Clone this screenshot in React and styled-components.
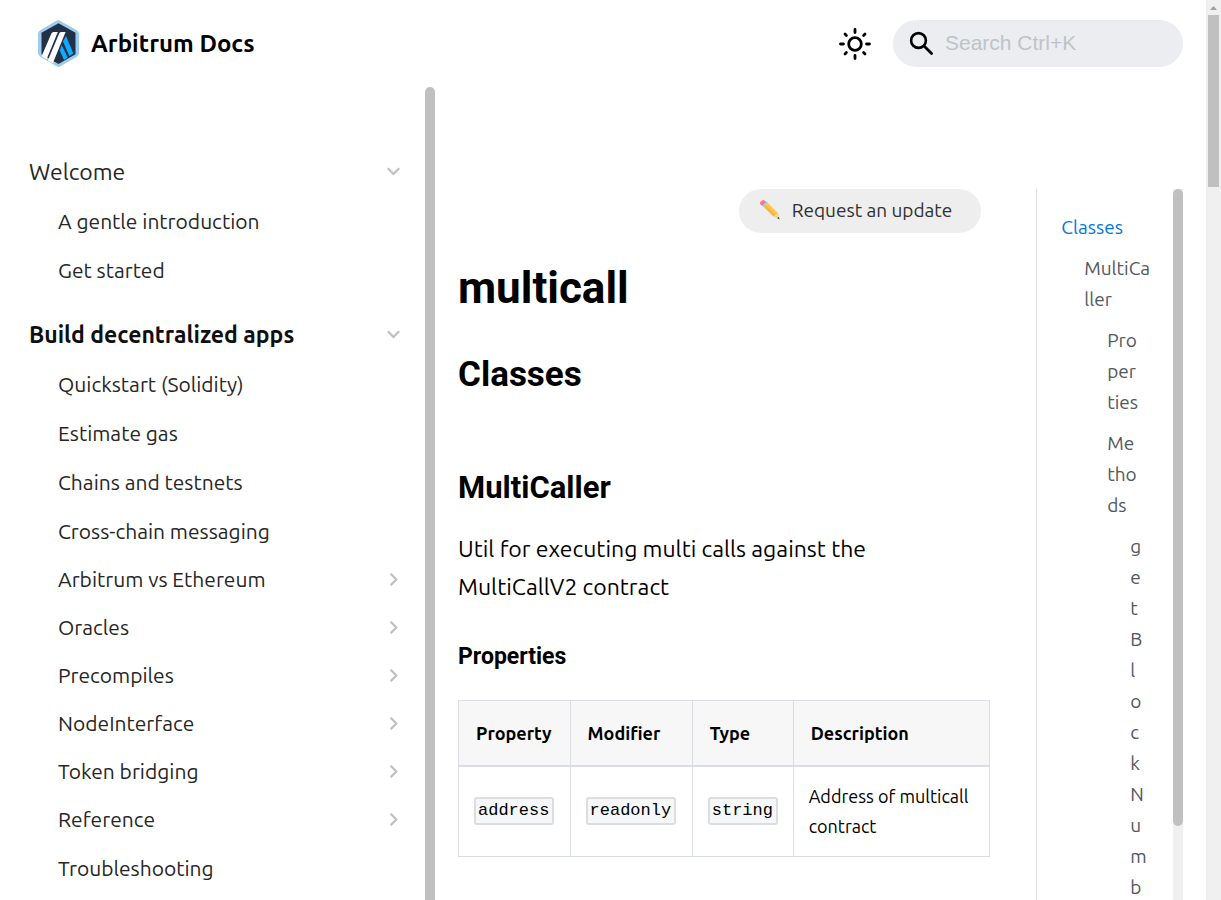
import React from "react";
import styled, { createGlobalStyle, css } from "styled-components";

const GlobalStyle = createGlobalStyle`
  *, *::before, *::after { box-sizing: border-box; }
  body {
    margin: 0;
    background: #fff;
    color: #000;
    font-family: Ubuntu, "Noto Sans", sans-serif;
    font-size: 23px;
    line-height: 38px;
  }
  a { color: inherit; text-decoration: none; }
  ul { list-style: none; margin: 0; padding: 0; }
`;

const Shell = styled.div`
  display: flex;
  height: 100vh;
  overflow: hidden;
`;

const Page = styled.div`
  flex: 1;
  min-width: 0;
  display: flex;
  flex-direction: column;
`;

const Header = styled.header`
  flex: none;
  display: flex;
  align-items: center;
  justify-content: space-between;
  height: 87px;
  padding: 0 23px 0 38px;
`;

const Brand = styled.a`
  display: flex;
  align-items: center;
  gap: 12px;
  font-size: 24px;
  font-weight: 700;
`;

const Tools = styled.div`
  display: flex;
  align-items: center;
  gap: 14px;
`;

const ThemeButton = styled.button`
  display: flex;
  align-items: center;
  justify-content: center;
  width: 48px;
  height: 48px;
  padding: 0;
  border: 0;
  background: none;
`;

const SearchBox = styled.label`
  display: flex;
  align-items: center;
  gap: 11px;
  width: 290px;
  height: 47px;
  padding: 0 16px;
  border-radius: 24px;
  background: #ebedf0;
`;

const SearchInput = styled.input`
  flex: 1;
  min-width: 0;
  padding: 0 0 2px;
  border: 0;
  outline: 0;
  background: none;
  font-family: "Liberation Sans", Arial, sans-serif;
  font-size: 21px;
  &::placeholder { color: #bec3c9; opacity: 1; }
`;

const Body = styled.div`
  flex: 1;
  min-height: 0;
  display: flex;
`;

const Sidebar = styled.aside`
  flex: none;
  display: flex;
  width: 435px;
`;

const Menu = styled.nav`
  flex: 1;
  min-width: 0;
  overflow: hidden;
  padding: 59px 12px 0;
`;

const MenuSection = styled.section`
  margin-bottom: 15px;
`;

const caretRow = css`
  display: flex;
  align-items: center;
  justify-content: space-between;
  width: 100%;
  padding: 0 13px 0 17px;
`;

const SectionButton = styled.button`
  ${caretRow}
  height: 50px;
  border: 0;
  background: none;
  color: ${(p) => (p.$active ? "#0f0f0f" : "#262626")};
  font-family: inherit;
  font-size: 23px;
  font-weight: ${(p) => (p.$active ? 700 : 400)};
`;

const MenuLink = styled.a`
  ${caretRow}
  height: ${(p) => (p.$category ? 48 : 49)}px;
  padding-left: 46px;
  color: #262626;
  font-size: 21px;
`;

const Track = styled.div`
  flex: none;
  width: 10px;
  background: ${(p) => (p.$plain ? "transparent" : "#f0f0f0")};
`;

const Thumb = styled.div`
  height: ${(p) => p.$size};
  border-radius: ${(p) => (p.$openEnd ? "5px 5px 0 0" : "5px")};
  background: #c0c0c0;
`;

const Main = styled.main`
  flex: 1;
  min-width: 0;
  display: flex;
  overflow: hidden;
  padding-top: 102px;
`;

const Article = styled.article`
  width: 75%;
  padding: 0 23px;
`;

const UpdateRow = styled.div`
  display: flex;
  justify-content: flex-end;
  margin: 0 9px 27px 0;
`;

const UpdateButton = styled.button`
  display: flex;
  align-items: center;
  gap: 11px;
  height: 44px;
  padding: 0 29px 2px 20px;
  border: 0;
  border-radius: 22px;
  background: #eee;
  color: #303030;
  font-family: inherit;
  font-size: 19px;
`;

const heading = css`
  font-family: Roboto, sans-serif;
  font-weight: 700;
`;

const Title = styled.h1`
  ${heading}
  margin: 0 0 37px;
  font-size: 44px;
  line-height: 56px;
`;

const Heading2 = styled.h2`
  ${heading}
  margin: 0 0 71px;
  font-size: 35px;
  line-height: 44px;
`;

const Heading3 = styled.h3`
  ${heading}
  margin: 0 0 23px;
  font-size: 31px;
  line-height: 39px;
`;

const Heading4 = styled.h4`
  ${heading}
  margin: 0 0 29px;
  font-size: 23px;
  line-height: 29px;
`;

const Paragraph = styled.p`
  margin: 0 0 36px;
`;

const Table = styled.table`
  width: 100%;
  table-layout: fixed;
  border-collapse: collapse;
  font-size: 18px;
  line-height: 30px;
`;

const HeadCell = styled.th`
  width: ${(p) => p.$width};
  height: 65px;
  padding: 0 17px;
  border: 1px solid #dadde1;
  border-bottom-width: 2px;
  background: #f7f7f7;
  text-align: left;
  font-weight: 700;
`;

const Cell = styled.td`
  padding: 14px 15px 15px;
  border: 1px solid #dadde1;
`;

const Code = styled.code`
  display: block;
  width: max-content;
  padding: 0 3px 0 2px;
  border: 2px solid #dcdddf;
  border-radius: 3px;
  background: #f6f7f8;
  font-family: "Liberation Mono", monospace;
  font-size: 17px;
  line-height: 24px;
`;

const TocColumn = styled.aside`
  width: 25%;
  padding: 0 23px;
`;

const Toc = styled.nav`
  display: flex;
  height: 100%;
  border-left: 1px solid #dadde1;
  overflow: hidden;
`;

const TocBody = styled.div`
  flex: 1;
  min-width: 0;
  padding: 23px 0 0 1px;
`;

const TocList = styled.ul`
  padding-left: 12px;
`;

const TocItem = styled.li`
  margin: 0 11px;
`;

const TocLink = styled.a`
  display: block;
  margin-bottom: 10px;
  color: ${(p) => (p.$active ? "#0078d8" : "#525860")};
  font-size: 19px;
  line-height: 31px;
  overflow-wrap: anywhere;
`;

const PageTrack = styled.div`
  flex: none;
  width: 15px;
  background: #f0f0f0;
`;

const PageArrow = styled.div`
  display: flex;
  align-items: center;
  justify-content: center;
  height: 15px;
`;

const PageThumb = styled.div`
  height: 172px;
  margin: 0 2px;
  background: #c0c0c0;
`;

const LogoIcon = () => (
  <svg width="41" height="47" viewBox="0 0 41 47" aria-hidden="true">
    <defs>
      <clipPath id="hex">
        <path d="M20.500 0 L38.500 10 Q41 11.500 41 14 V33 Q41 35.500 38.500 37 L22.500 46.200 Q20.500 47.400 18.500 46.200 L2.500 37 Q0 35.500 0 33 V14 Q0 11.500 2.500 10 L18.500 0.800 Z" />
      </clipPath>
    </defs>
    <g clipPath="url(#hex)">
      <rect width="41" height="47" fill="#9dcced" />
      <path d="M20.500 3.200 L37.500 12.800 V34.200 L20.500 43.900 L3.500 34.200 V12.800 Z" fill="#213147" />
      <path d="M26.300 19 L28 16 L35.300 33.200 L31.400 36.200 L25 21.500 Z" fill="#12aaff" />
      <path d="M23.700 25 L29.800 37.600 L26 40 L21.800 30.400 Z" fill="#12aaff" />
      <path d="M15.200 12 H19.800 L8.600 39.300 L3.500 36.400 L13.600 13 Z" fill="#fff" />
      <path d="M22.800 12 H27.600 L14.800 43.200 L9.800 40.400 L21.400 13 Z" fill="#fff" />
    </g>
  </svg>
);

const SunIcon = () => (
  <svg width="34" height="34" viewBox="0 0 34 34" fill="none" stroke="#000" strokeWidth="2.800" strokeLinecap="round" aria-hidden="true">
    <circle cx="17" cy="17" r="6.300" />
    <path d="M17 2.500v3M17 28.500v3M2.500 17h3M28.500 17h3M7 7l1.400 1.400M25.600 25.600L27 27M7 27l1.400-1.400M25.600 8.400L27 7" />
  </svg>
);

const SearchIcon = () => (
  <svg width="25" height="25" viewBox="0 0 25 25" fill="none" stroke="#000" aria-hidden="true">
    <circle cx="9.500" cy="9.500" r="7.400" strokeWidth="2.600" />
    <path d="M15 15l7.600 7.600" strokeWidth="2.800" strokeLinecap="round" />
  </svg>
);

const PencilIcon = () => (
  <svg width="22" height="22" viewBox="0 0 22 22" aria-hidden="true">
    <path d="M4.800 7.200 L8.200 3.200 L19 14 L20 19.800 L14.400 17.600 Z" fill="#fbc74e" />
    <path d="M6.200 5.600 L16.600 15.900 L14.400 17.600 L4.200 7.800 Z" fill="#f5a93b" opacity=".6" />
    <path d="M14.400 17.600 L19 14 L20.300 20 Z" fill="#efd6a0" />
    <path d="M18.200 19.200 L19.900 17.800 L20.500 20.400 Z" fill="#4b4b4b" />
    <path d="M3 6.600 L7.100 2.300 L8.700 3.800 L4.700 8.300 Z" fill="#9ed7e8" />
    <path d="M1.400 5.200 Q.5 4 1.600 2.700 L3 1.500 Q4.300.6 5.400 1.500 L7.100 3.100 L3.400 7 Z" fill="#f2788f" />
  </svg>
);

const Caret = ({ open }) => (
  <svg width="13" height="13" viewBox="0 0 13 13" fill="none" stroke="#bfbfbf" strokeWidth="2.200" aria-hidden="true">
    <path d={open ? "M.8 3.200L6.500 9L12.200 3.200" : "M3.600.8L9.300 6.500L3.600 12.200"} />
  </svg>
);

const sections = [
  {
    label: "Welcome",
    items: [["A gentle introduction"], ["Get started"]],
  },
  {
    label: "Build decentralized apps",
    active: true,
    items: [
      ["Quickstart (Solidity)"],
      ["Estimate gas"],
      ["Chains and testnets"],
      ["Cross-chain messaging"],
      ["Arbitrum vs Ethereum", true],
      ["Oracles", true],
      ["Precompiles", true],
      ["NodeInterface", true],
      ["Token bridging", true],
      ["Reference", true],
      ["Troubleshooting"],
    ],
  },
];

const toc = [
  {
    label: "Classes",
    active: true,
    children: [
      {
        label: "MultiCaller",
        children: [
          { label: "Properties" },
          { label: "Methods", children: [{ label: "getBlockNumberInput" }] },
        ],
      },
    ],
  },
];

const columns = [
  ["Property", "21%"],
  ["Modifier", "23%"],
  ["Type", "19%"],
  ["Description", "37%"],
];

const TocTree = ({ items }) => (
  <TocList>
    {items.map((item) => (
      <TocItem key={item.label}>
        <TocLink href="#" $active={item.active}>{item.label}</TocLink>
        {item.children && <TocTree items={item.children} />}
      </TocItem>
    ))}
  </TocList>
);

export default function App() {
  return (
    <>
      <GlobalStyle />
      <Shell>
        <Page>
          <Header>
            <Brand href="#">
              <LogoIcon />
              Arbitrum Docs
            </Brand>
            <Tools>
              <ThemeButton type="button" aria-label="Switch theme">
                <SunIcon />
              </ThemeButton>
              <SearchBox>
                <SearchIcon />
                <SearchInput type="search" placeholder="Search Ctrl+K" aria-label="Search" />
              </SearchBox>
            </Tools>
          </Header>
          <Body>
            <Sidebar>
              <Menu aria-label="Docs">
                {sections.map((section) => (
                  <MenuSection key={section.label}>
                    <SectionButton type="button" $active={section.active}>
                      {section.label}
                      <Caret open />
                    </SectionButton>
                    <ul>
                      {section.items.map(([label, category]) => (
                        <li key={label}>
                          <MenuLink href="#" $category={category}>
                            {label}
                            {category && <Caret />}
                          </MenuLink>
                        </li>
                      ))}
                    </ul>
                  </MenuSection>
                ))}
              </Menu>
              <Track $plain>
                <Thumb $size="100%" $openEnd />
              </Track>
            </Sidebar>
            <Main>
              <Article>
                <UpdateRow>
                  <UpdateButton type="button">
                    <PencilIcon />
                    Request an update
                  </UpdateButton>
                </UpdateRow>
                <Title>multicall</Title>
                <Heading2>Classes</Heading2>
                <Heading3>MultiCaller</Heading3>
                <Paragraph>Util for executing multi calls against the MultiCallV2 contract</Paragraph>
                <Heading4>Properties</Heading4>
                <Table>
                  <thead>
                    <tr>
                      {columns.map(([label, width]) => (
                        <HeadCell key={label} $width={width} scope="col">{label}</HeadCell>
                      ))}
                    </tr>
                  </thead>
                  <tbody>
                    <tr>
                      <Cell><Code>address</Code></Cell>
                      <Cell><Code>readonly</Code></Cell>
                      <Cell><Code>string</Code></Cell>
                      <Cell>Address of multicall contract</Cell>
                    </tr>
                  </tbody>
                </Table>
              </Article>
              <TocColumn>
                <Toc aria-label="On this page">
                  <TocBody>
                    <TocTree items={toc} />
                  </TocBody>
                  <Track>
                    <Thumb $size="637px" />
                  </Track>
                </Toc>
              </TocColumn>
            </Main>
          </Body>
        </Page>
        <PageTrack>
          <PageArrow>
            <svg width="7" height="4" viewBox="0 0 7 4" aria-hidden="true">
              <path d="M3.500 0L7 4H0Z" fill="#a0a0a0" />
            </svg>
          </PageArrow>
          <PageThumb />
        </PageTrack>
      </Shell>
    </>
  );
}
